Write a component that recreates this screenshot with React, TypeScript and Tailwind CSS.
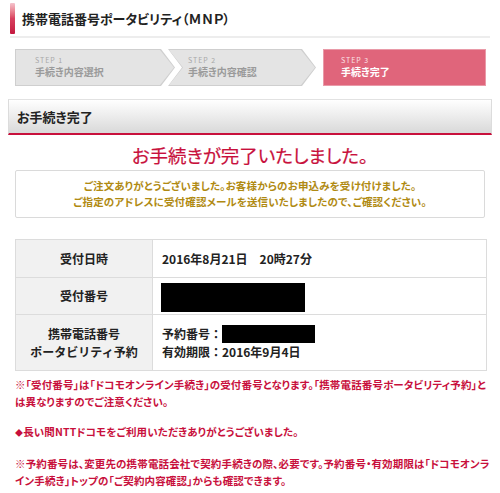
import React from "react";

const steps = [
  { no: "STEP 1", label: "手続き内容選択" },
  { no: "STEP 2", label: "手続き内容確認" },
];

export default function App() {
  return (
    <div className="w-[500px] min-h-[493px] bg-white font-['Noto_Sans_CJK_JP','Noto_Sans',sans-serif] [font-feature-settings:'palt'] text-[#222]">
      {/* page title */}
      <div className="mx-[10px] flex h-[38px] items-center gap-[7px] border-b-2 border-[#ededed]">
        <div className="h-[31px] w-[5px] rounded-[1px] bg-linear-to-b from-[#f4c3cd] via-[#d8405f] to-[#c4163f]" />
        <h1 className="text-[13px] font-bold leading-none text-[#222]">携帯電話番号ポータビリティ（ＭＮＰ）</h1>
      </div>

      {/* steps */}
      <div className="ml-[15px] mt-[11px] flex h-[37px]">
        <div className="w-[160px] bg-[#cfcfcf] p-px [clip-path:polygon(0_0,calc(100%_-_14px)_0,100%_50%,calc(100%_-_14px)_100%,0_100%)]">
          <div className="flex h-full flex-col justify-center bg-[#e4e4e4] pl-[19px] [clip-path:polygon(0_0,calc(100%_-_14px)_0,100%_50%,calc(100%_-_14px)_100%,0_100%)]">
            <span className="text-[7px] leading-[9px] tracking-[1px] text-[#a8a8a8]">{steps[0].no}</span>
            <span className="text-[10px] font-bold leading-[14px] text-[#9a9a9a]">{steps[0].label}</span>
          </div>
        </div>
        <div className="-ml-[7px] w-[148px] bg-[#cfcfcf] p-px [clip-path:polygon(0_0,calc(100%_-_14px)_0,100%_50%,calc(100%_-_14px)_100%,0_100%,14px_50%)]">
          <div className="flex h-full flex-col justify-center bg-[#e4e4e4] pl-[19px] [clip-path:polygon(0_0,calc(100%_-_14px)_0,100%_50%,calc(100%_-_14px)_100%,0_100%,14px_50%)]">
            <span className="text-[7px] leading-[9px] tracking-[1px] text-[#a8a8a8]">{steps[1].no}</span>
            <span className="text-[10px] font-bold leading-[14px] text-[#9a9a9a]">{steps[1].label}</span>
          </div>
        </div>
        <div className="ml-[7px] flex w-[163px] flex-col justify-center border border-[#e99aa8] bg-[#e0657b] pl-[17px]">
          <span className="text-[7px] leading-[9px] tracking-[1px] text-[#fbe3e7]">STEP 3</span>
          <span className="text-[10px] font-bold leading-[14px] text-white">手続き完了</span>
        </div>
      </div>

      {/* section header */}
      <div className="mx-[8px] mt-[13px] flex h-[36px] items-center border-x border-t border-b-2 border-x-[#dcdcdc] border-t-[#e2e2e2] border-b-[#c8103c] bg-linear-to-b from-white to-[#d9d9d9] pl-[8px]">
        <h2 className="text-[13px] font-bold text-[#222]">お手続き完了</h2>
      </div>

      <p className="mt-[7px] text-center text-[18.5px] leading-[26px] text-[#c8103c] [-webkit-text-stroke:0.2px_#c8103c]">お手続きが完了いたしました。</p>

      <div className="mx-[15px] mt-[2px] rounded-[2px] border border-[#dadada] py-[7px] text-center text-[10.5px] font-bold leading-[16px] tracking-[0.15px] text-[#b08a12]">
        <p>ご注文ありがとうございました。お客様からのお申込みを受け付けました。</p>
        <p>ご指定のアドレスに受付確認メールを送信いたしましたので、ご確認ください。</p>
      </div>

      {/* result table */}
      <table className="mx-[15px] mt-[21px] w-[472px] border-collapse text-[12px] font-bold [font-feature-settings:normal]">
        <tbody>
          <tr className="h-[38px]">
            <th className="w-[137px] border border-[#dcdcdc] bg-[#f1f1f1] text-center font-bold">受付日時</th>
            <td className="border border-[#dcdcdc] pl-[9px]">2016年8月21日　20時27分</td>
          </tr>
          <tr className="h-[37px]">
            <th className="border border-[#dcdcdc] bg-[#f1f1f1] text-center font-bold">受付番号</th>
            <td className="border border-[#dcdcdc] pl-[8px]">
              <div className="mt-[2px] h-[29px] w-[144px] bg-black" />
            </td>
          </tr>
          <tr className="h-[56px]">
            <th className="border border-[#dcdcdc] bg-[#f1f1f1] text-center font-bold leading-[18px]">
              携帯電話番号
              <br />
              ポータビリティ予約
            </th>
            <td className="border border-[#dcdcdc] pl-[9px] leading-[18px]">
              <div className="flex items-center">
                <span>予約番号：</span>
                <span className="inline-block h-[18px] w-[93px] bg-black" />
              </div>
              <div>有効期限：2016年9月4日</div>
            </td>
          </tr>
        </tbody>
      </table>

      {/* notes */}
      <div className="mx-[15px] mt-[5px] whitespace-nowrap text-[10.5px] font-bold leading-[17px] tracking-[0.15px] text-[#c8103c]">
        <p>
          ※「受付番号」は「ドコモオンライン手続き」の受付番号となります。「携帯電話番号ポータビリティ予約」と
          <br />
          は異なりますのでご注意ください。
        </p>
        <p className="mt-[13px]">
          <span className="text-[8px]">◆</span>長い間NTTドコモをご利用いただきありがとうございました。
        </p>
        <p className="mt-[14px]">
          ※予約番号は、変更先の携帯電話会社で契約手続きの際、必要です。予約番号・有効期限は「ドコモオンラ
          <br />
          イン手続き」トップの「ご契約内容確認」からも確認できます。
        </p>
      </div>
    </div>
  );
}
